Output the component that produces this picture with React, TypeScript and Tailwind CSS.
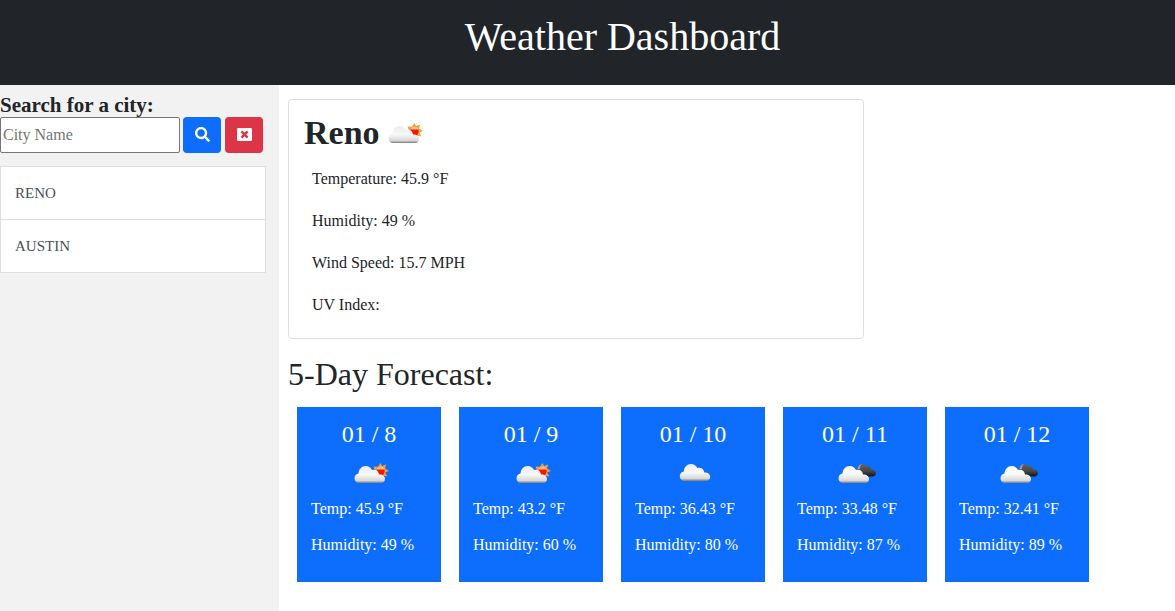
import { useId, useState } from "react";
import { FaSearch, FaWindowClose } from "react-icons/fa";

type Sky = "sunny" | "cloud" | "broken";

const forecast: { date: string; sky: Sky; temp: string; humidity: string }[] = [
  { date: "01 / 8", sky: "sunny", temp: "45.9", humidity: "49" },
  { date: "01 / 9", sky: "sunny", temp: "43.2", humidity: "60" },
  { date: "01 / 10", sky: "cloud", temp: "36.43", humidity: "80" },
  { date: "01 / 11", sky: "broken", temp: "33.48", humidity: "87" },
  { date: "01 / 12", sky: "broken", temp: "32.41", humidity: "89" },
];

const cloudPath =
  "M5.5 19.5C2.5 19.5 0.5 17.3 0.5 14.7C0.5 12 2.3 10.2 4.5 9.9C4.7 5.8 7.7 2.5 11.7 2.5C14.8 2.5 17 4.2 18 6.5C21.5 5.3 24.6 7.4 25 10.9C28.5 10.7 31 12.7 31 15.3C31 17.8 29.2 19.5 26.5 19.5Z";

function WeatherIcon({ sky }: { sky: Sky }) {
  const id = useId();
  const width = sky === "cloud" ? 32 : sky === "sunny" ? 35 : 38;
  return (
    <svg width={width} height="22" viewBox={`0 0 ${width} 22`} aria-hidden="true" className="shrink-0">
      <defs>
        <linearGradient id={`${id}c`} x1="0" y1="0" x2="0" y2="1">
          <stop offset="0" stopColor={sky === "broken" ? "#ffffff" : "#ececec"} />
          <stop offset="0.5" stopColor="#f8f8f8" />
          <stop offset="0.85" stopColor="#d8d8d8" />
          <stop offset="0.93" stopColor="#a6a6a6" />
          <stop offset="1" stopColor="#777777" />
        </linearGradient>
        <linearGradient id={`${id}d`} x1="0" y1="0" x2="0" y2="1">
          <stop offset="0" stopColor="#646464" />
          <stop offset="0.6" stopColor="#444444" />
          <stop offset="1" stopColor="#141414" />
        </linearGradient>
      </defs>
      {sky === "sunny" && (
        <g>
          <path
            d="M26.5 0L28.1 3L32.2 1.6L31 5.4L35 8L31.1 9.6L33.4 13.6L29.7 12.7L27.8 15.5L25 13.5L20 13L21.5 9.5L19.6 3.4L23.9 3.7Z"
            fill="#f2a13a"
          />
          <circle cx="26.7" cy="8.1" r="4.4" fill="#f5c386" />
          <path d="M22.5 6.5H30.7C31 9.5 30 11.6 28.4 12.3H22.5Z" fill="#ff1200" />
        </g>
      )}
      {sky === "broken" && (
        <g>
          <path
            d="M19 6.5C19.5 3 21.4 1 24.2 1C26.3 1 27.8 2 28.4 3.4C31 2.8 33 4.3 33.2 6.6C36 6.5 38 7.8 38 10C38 12.3 36.5 13.5 34.4 13.5H23Z"
            fill={`url(#${id}d)`}
          />
          <path d="M19.3 6C19.8 3.2 21.3 1.2 24 1.2C22.6 2.2 22 3.8 22 6.2Z" fill="#999999" />
        </g>
      )}
      <path
        d={cloudPath}
        fill={`url(#${id}c)`}
        transform={sky === "cloud" ? "translate(0.3 -1.5)" : "translate(0 0.6)"}
      />
    </svg>
  );
}

export default function App() {
  const [city, setCity] = useState("");
  return (
    <div className="flex min-h-screen flex-col bg-white font-['Liberation_Serif',serif] text-base leading-6 text-[#212529]">
      <header className="bg-[#212529] pt-3 pb-6 pl-[70px] text-center text-white">
        <h1 className="text-[40px] leading-[49px]">Weather Dashboard</h1>
      </header>

      <div className="flex grow">
        <aside className="w-[279px] shrink-0 bg-[#f2f2f2] pt-2">
          <form onSubmit={(e) => e.preventDefault()}>
            <label htmlFor="city" className="block text-[21px] leading-6 font-bold">
              Search for a city:
            </label>
            <div className="flex">
              <input
                id="city"
                type="text"
                value={city}
                onChange={(e) => setCity(e.target.value)}
                placeholder="City Name"
                className="h-9 w-[180px] rounded-xs border border-[#767676] bg-white px-0.5 placeholder:text-[#757575]"
              />
              <button
                type="submit"
                aria-label="Search"
                className="ml-[3px] flex h-9 w-[38px] items-center justify-center rounded bg-[#0d6efd] pb-0.5 text-white"
              >
                <FaSearch size={15} />
              </button>
              <button
                type="button"
                aria-label="Clear"
                onClick={() => setCity("")}
                className="ml-1 flex h-9 w-[38px] items-center justify-center rounded bg-[#dc3545] pb-0.5 text-white"
              >
                <FaWindowClose size={15} />
              </button>
            </div>
          </form>
          <ul className="mt-[13px] w-[266px] divide-y divide-[#dfdfdf] border border-[#dfdfdf] bg-white text-[#495057]">
            {["RENO", "AUSTIN"].map((name) => (
              <li key={name}>
                <button type="button" className="block h-[52px] w-full px-3.5 text-left text-[15px]">
                  {name}
                </button>
              </li>
            ))}
          </ul>
        </aside>

        <main className="min-w-0 grow px-[9px] pt-3.5 pb-7">
          <section className="w-full max-w-[576px] rounded border border-[#dfdfdf] px-[15px] pt-3.5 pb-[21px]">
            <h2 className="flex items-center gap-2 text-[34px] leading-[38px] font-bold">
              Reno
              <span className="flex pt-0.5">
                <WeatherIcon sky="sunny" />
              </span>
            </h2>
            <div className="flex flex-col gap-[18px] px-2 pt-[15px]">
              <p>Temperature: 45.9 °F</p>
              <p>Humidity: 49 %</p>
              <p>Wind Speed: 15.7 MPH</p>
              <p>UV Index:</p>
            </div>
          </section>

          <h2 className="pt-4 pb-3.5 text-[32px] leading-[38px]">5-Day Forecast:</h2>
          <div className="flex flex-wrap gap-[18px] px-[9px]">
            {forecast.map((day) => (
              <article key={day.date} className="w-36 bg-[#0d6efd] px-3.5 pt-3 pb-[25px] text-white">
                <h3 className="text-center text-2xl leading-[30px]">{day.date}</h3>
                <div className="flex justify-center pt-3.5 pb-3 pl-1">
                  <WeatherIcon sky={day.sky} />
                </div>
                <p className="leading-6 whitespace-nowrap">Temp: {day.temp} °F</p>
                <p className="pt-3 leading-6 whitespace-nowrap">Humidity: {day.humidity} %</p>
              </article>
            ))}
          </div>
        </main>
      </div>
    </div>
  );
}
